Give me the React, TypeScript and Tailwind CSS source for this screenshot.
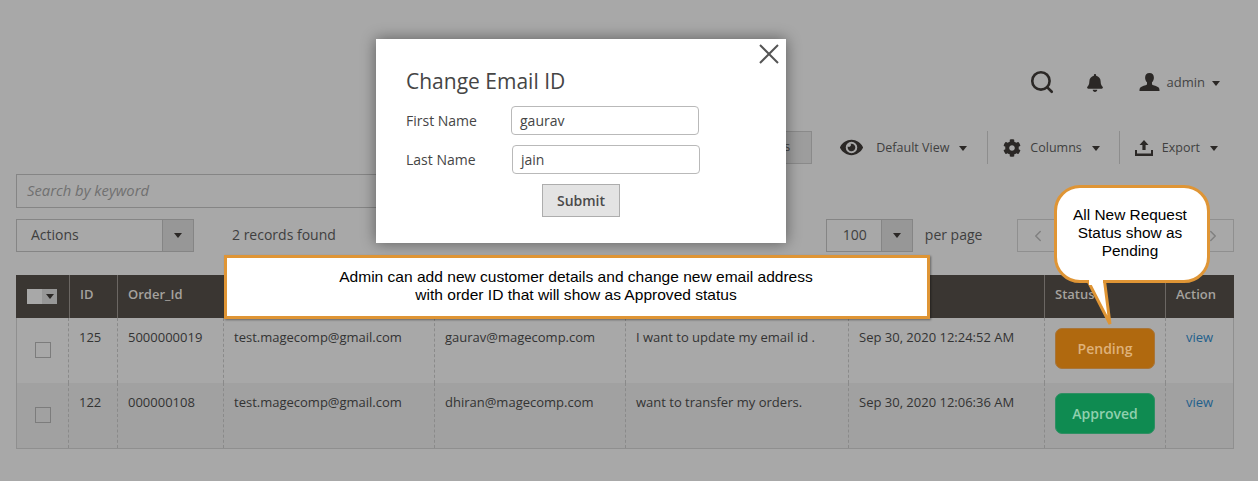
import { ChevronLeft, ChevronRight, Search } from "lucide-react";
import { FaBell, FaCog, FaEye } from "react-icons/fa";

const columns = [
  { label: "", width: "w-[54px]" },
  { label: "ID", width: "w-[48px]" },
  { label: "Order_Id", width: "w-[107px]" },
  { label: "", width: "w-[211px]" },
  { label: "", width: "w-[191px]" },
  { label: "", width: "w-[222px]" },
  { label: "", width: "w-[196px]" },
  { label: "Status", width: "w-[121px]" },
  { label: "Action", width: "w-[68px]" },
];

const rows = [
  {
    id: "125",
    order: "5000000019",
    email: "test.magecomp@gmail.com",
    newEmail: "gaurav@magecomp.com",
    comment: "I want to update my email id .",
    date: "Sep 30, 2020 12:24:52 AM",
    status: "Pending",
    statusClass: "bg-[#b0690f] text-[#dfb27a] border-[#a8753a]",
    rowClass: "bg-[#a8a8a8]",
  },
  {
    id: "122",
    order: "000000108",
    email: "test.magecomp@gmail.com",
    newEmail: "dhiran@magecomp.com",
    comment: "want to transfer my orders.",
    date: "Sep 30, 2020 12:06:36 AM",
    status: "Approved",
    statusClass: "bg-[#0f8b51] text-[#8fd0ae] border-[#2f8f63]",
    rowClass: "bg-[#a1a1a1]",
  },
];

function Caret({ className = "" }: { className?: string }) {
  return (
    <span
      className={`inline-block h-0 w-0 border-x-[4px] border-t-[5px] border-x-transparent border-t-[#2b2826] ${className}`}
    />
  );
}

function Cell({ width, last, children }: { width: string; last?: boolean; children: React.ReactNode }) {
  return (
    <div
      className={`${width} pt-[10px] ${last ? "pl-[20px]" : "border-r border-dashed border-r-[#8a8a8a] px-[10px]"}`}
    >
      {children}
    </div>
  );
}

export default function App() {
  return (
    <div
      className="relative h-[481px] w-[1258px] overflow-hidden bg-[#a8a8a8] text-[#333] text-[13px]"
      style={{ fontFamily: '"Open Sans", sans-serif' }}
    >
      {/* Top bar */}
      <div className="flex h-[131px] items-start justify-end pt-[71px]">
        <Search size={26} strokeWidth={2.4} className="-mt-[2px] mr-[31px] text-[#2b2826]" />
        <FaBell size={18} className="mr-[35px] mt-[3px] text-[#2b2826]" />
        <svg width="21" height="18" viewBox="0 0 22 20" preserveAspectRatio="none" className="mr-[7px] mt-[2px] fill-[#2b2826]">
          <path d="M11 0c3 0 4.600 2.200 4.600 5.200 0 2-.8 4-2 5.200v2.200c0 1 4.200 1.600 6.600 3.200.9.600 1.300 1.600 1.300 4.200H.5c0-2.600.4-3.600 1.300-4.200 2.400-1.600 6.600-2.200 6.600-3.200v-2.200c-1.200-1.200-2-3.200-2-5.200C6.400 2.200 8 0 11 0z" />
        </svg>
        <span className="mr-[7px] mt-[2px] text-[#444]">admin</span>
        <Caret className="mr-[38px] mt-[10px]" />
      </div>

      {/* Toolbar */}
      <div className="flex h-[33px] items-center justify-end text-[12.500px] text-[#3f3f3f]">
        <div className="mr-[28px] flex h-[33px] w-[120px] items-center justify-end border border-[#8a8a8a] bg-[#9d9d9d] pr-[21px]">
          Filters
        </div>
        <FaEye size={23} className="mr-[13px] text-[#2b2826]" />
        <span className="mr-[10px] mt-[2px]">Default View</span>
        <Caret className="mr-[20px] mt-[1px]" />
        <div className="mr-[15px] h-[33px] w-px bg-[#8d8d8d]" />
        <FaCog size={18} className="mr-[9px] text-[#2b2826]" />
        <span className="mr-[10px] mt-[1px]">Columns</span>
        <Caret className="mr-[19px] mt-[1px]" />
        <div className="mr-[15px] h-[33px] w-px bg-[#8d8d8d]" />
        <svg width="18" height="16" viewBox="0 0 18 16" className="mr-[9px] fill-[#2b2826]">
          <path d="M9 0l4.500 5H10.600v5H7.400V5H4.500zM0 10h2v3.500h14V10h2v6H0z" />
        </svg>
        <span className="mr-[10px] mt-[2px]">Export</span>
        <Caret className="mr-[40px] mt-[1px]" />
      </div>

      {/* Search */}
      <div className="ml-[16px] mt-[10px] flex h-[34px] w-[400px] items-center border border-[#858585] pb-[2px] pl-[10px] text-[14.800px] italic text-[#707070]">
        Search by keyword
      </div>

      {/* Actions and pager */}
      <div className="mt-[11px] flex h-[33px] items-center pl-[16px] text-[14px]">
        <div className="flex h-[33px] w-[178px] border border-[#858585]">
          <span className="flex-1 pl-[14px] pt-[4px] text-[#3f3f3f]">Actions</span>
          <span className="flex w-[31px] items-center justify-center border-l border-[#858585] bg-[#979797]">
            <Caret />
          </span>
        </div>
        <span className="mb-[2px] ml-[38px] text-[#3f3f3f]">2 records found</span>
        <div className="ml-[490px] flex h-[33px] w-[87px] border border-[#858585]">
          <span className="flex-1 pl-[16px] pt-[4px] text-[#3f3f3f]">100</span>
          <span className="flex w-[31px] items-center justify-center border-l border-[#858585] bg-[#979797]">
            <Caret />
          </span>
        </div>
        <span className="mb-[2px] ml-[12px] text-[#3f3f3f]">per page</span>
        <div className="ml-[35px] flex h-[33px] w-[217px] items-center justify-between border border-[#8f8f8f] px-[11px] text-[#808080]">
          <ChevronLeft size={18} />
          <ChevronRight size={18} />
        </div>
      </div>

      {/* Grid */}
      <div className="ml-[16px] mt-[23px] w-[1218px]">
        <div className="flex h-[43px] bg-[#3a3632] font-semibold text-[#a5a29e]">
          {columns.map((col, i) => (
            <div
              key={i}
              className={`${col.width} flex items-center border-r border-r-[#6b6763] px-[10px] pb-[4px] last:border-r-0 ${i === 0 ? "pl-[11px]" : ""}`}
            >
              {i === 0 && (
                <span className="mt-[3px] flex h-[15px] w-[30px]">
                  <span className="w-[15px] bg-[#a8a8a8]" />
                  <span className="flex flex-1 items-center justify-center bg-[#979797]">
                    <Caret />
                  </span>
                </span>
              )}
              {col.label}
            </div>
          ))}
        </div>
        <div className="border-x border-b border-[#8f8f8f]">
          {rows.map((row) => (
            <div key={row.id} className={`flex h-[65px] -mx-px border-x border-[#8f8f8f] ${row.rowClass}`}>
              <Cell width="w-[52px]">
                <span className="ml-[8px] mt-[14px] block h-[16px] w-[16px] border border-[#7c7c7c]" />
              </Cell>
              <Cell width="w-[49px]">{row.id}</Cell>
              <Cell width="w-[106px]">{row.order}</Cell>
              <Cell width="w-[211px]">{row.email}</Cell>
              <Cell width="w-[191px]">{row.newEmail}</Cell>
              <Cell width="w-[223px]">{row.comment}</Cell>
              <Cell width="w-[196px]">{row.date}</Cell>
              <Cell width="w-[121px]">
                <span
                  className={`flex h-[41px] w-[100px] items-center justify-center rounded-[7px] border text-[14px] font-semibold ${row.statusClass}`}
                >
                  {row.status}
                </span>
              </Cell>
              <Cell width="w-[67px]" last>
                <span className="text-[#1f5f8c]">view</span>
              </Cell>
            </div>
          ))}
        </div>
      </div>

      {/* Modal */}
      <div className="absolute left-[376px] top-[39px] h-[204px] w-[410px] bg-white pl-[30px] pt-[28px] text-[#454545] shadow-[0_0_14px_rgba(0,0,0,0.45)]">
        <svg width="20" height="20" viewBox="0 0 20 20" className="absolute right-[7px] top-[5px] stroke-[#555]" strokeWidth="2">
          <path d="M1 1l18 18M19 1L1 19" fill="none" />
        </svg>
        <h1 className="text-[21px] leading-[29px]">Change Email ID</h1>
        <div className="mt-[10px] flex h-[29px] items-center text-[14px]">
          <span className="w-[105px]">First Name</span>
          <span className="flex h-[29px] w-[188px] items-center rounded-[4px] border border-[#b9b9b9] pl-[8px]">gaurav</span>
        </div>
        <div className="mt-[10px] flex h-[29px] items-center text-[14px]">
          <span className="w-[106px]">Last Name</span>
          <span className="flex h-[29px] w-[188px] items-center rounded-[4px] border border-[#b9b9b9] pl-[8px]">jain</span>
        </div>
        <button className="ml-[136px] mt-[10px] h-[33px] w-[78px] border border-[#adadad] bg-[#e3e3e3] text-[14px] font-semibold text-[#4a4a4a]">
          Submit
        </button>
      </div>

      {/* Wide callout */}
      <div
        className="absolute left-[224px] top-[255px] flex h-[64px] w-[706px] flex-col items-center justify-center border-[3px] border-[#df9535] bg-white pb-[2px] pr-[2px] text-[15.550px] leading-[18px] text-black shadow-[1px_1px_2px_rgba(0,0,0,0.4)]"
        style={{ fontFamily: '"Liberation Sans", sans-serif' }}
      >
        <span>Admin can add new customer details and change new email address</span>
        <span>with order ID that will show as Approved status</span>
      </div>

      {/* Speech bubble */}
      <svg width="40" height="50" viewBox="0 0 40 50" className="absolute left-[1080px] top-[277px]">
        <path d="M6 0 L30 47 L24 0 Z" fill="#fff" stroke="#df9535" strokeWidth="3" />
      </svg>
      <div
        className="absolute left-[1054px] top-[185px] flex h-[98px] w-[156px] items-center justify-center rounded-[26px] border-[3px] border-[#df9535] bg-white pb-[2px] pr-[4px] text-center text-[15.400px] leading-[18px] text-black"
        style={{ fontFamily: '"Liberation Sans", sans-serif' }}
      >
        <span>
          All New Request
          <br />
          Status show as
          <br />
          Pending
        </span>
      </div>
      <div className="absolute left-[1089px] top-[279px] h-[6px] w-[14px] bg-white" />
    </div>
  );
}
